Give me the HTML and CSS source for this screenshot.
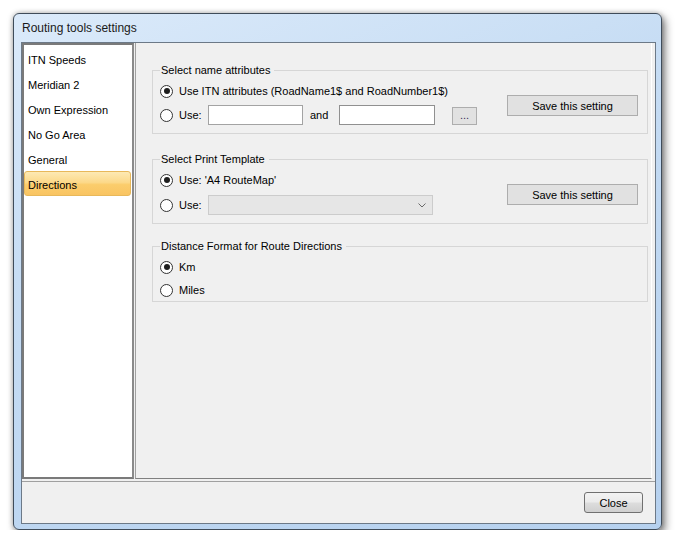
FILE: index.html
```html
<!DOCTYPE html>
<html lang="en">
<head>
  <meta charset="UTF-8" />
  <title>Routing tools settings</title>
  <link rel="stylesheet" href="styles.css">
</head>
<body>
  <div class="window">
    <div class="titlebar">Routing tools settings</div>
    <div class="client">
      <div class="main">
        <ul class="nav">
          <li>ITN Speeds</li>
          <li>Meridian 2</li>
          <li>Own Expression</li>
          <li>No Go Area</li>
          <li>General</li>
          <li class="selected">Directions</li>
        </ul>

        <div class="page">
          <fieldset class="group group-names">
            <legend>Select name attributes</legend>
            <div class="group-body">
              <div class="options">
                <div class="row"><span class="radio checked"></span><span>Use ITN attributes (RoadName1$ and RoadNumber1$)</span></div>
                <div class="row">
                  <span class="radio"></span><span class="use">Use:</span>
                  <input type="text" class="textbox" />
                  <span class="and">and</span>
                  <input type="text" class="textbox wide" />
                  <button class="browse">...</button>
                </div>
              </div>
              <button class="btn save">Save this setting</button>
            </div>
          </fieldset>

          <fieldset class="group group-template">
            <legend>Select Print Template</legend>
            <div class="group-body">
              <div class="options">
                <div class="row"><span class="radio checked"></span><span>Use: 'A4 RouteMap'</span></div>
                <div class="row">
                  <span class="radio"></span><span class="use">Use:</span>
                  <div class="combo">
                    <svg width="8" height="5" viewBox="0 0 8 5"><path d="M0.5 0.5 L4 4 L7.5 0.5" fill="none" stroke="#6a6a6a" stroke-width="1"/></svg>
                  </div>
                </div>
              </div>
              <button class="btn save">Save this setting</button>
            </div>
          </fieldset>

          <fieldset class="group group-distance">
            <legend>Distance Format for Route Directions</legend>
            <div class="options">
              <div class="row"><span class="radio checked"></span><span>Km</span></div>
              <div class="row"><span class="radio"></span><span>Miles</span></div>
            </div>
          </fieldset>
        </div>
      </div>

      <div class="footer">
        <button class="btn close">Close</button>
      </div>
    </div>
  </div>
</body>
</html>
```

FILE: styles.css
```css
body {
  margin: 0;
  background-color: #ffffff;
  font-family: "Liberation Sans", Arial, sans-serif;
  font-size: 11px;
  color: #000;
}
.window {
  margin: 13px 0 0 13px;
  width: 649px;
  height: 517px;
  box-sizing: border-box;
  padding: 0 5px 5px 7px;
  border: 1px solid #3f4c5a;
  border-radius: 6px;
  background: linear-gradient(160deg, #dbeafa 0%, #c7ddf4 35%, #bdd6f1 70%, #b6d1ef 100%);
  box-shadow: 3px 4px 9px rgba(0, 0, 0, 0.5), 0 0 5px rgba(0, 0, 0, 0.25);
}
.titlebar {
  height: 28px;
  line-height: 28px;
  padding-left: 1px;
  font-size: 12px;
  color: #1a1a1a;
}
.client {
  width: 635px;
  height: 482px;
  box-sizing: border-box;
  border: 1px solid #6c7987;
  background-color: #f0f0f0;
  display: flex;
  flex-direction: column;
}
.main {
  display: flex;
  height: 436px;
}
.nav {
  width: 112px;
  box-sizing: border-box;
  margin: 0;
  padding: 1px 0 0 0;
  list-style: none;
  background-color: #fff;
  border: 2px solid #7a7a7a;
  border-right-color: #8a8a8a;
}
.nav li {
  height: 25px;
  line-height: 28px;
  padding-left: 4px;
  margin-right: 1px;
  white-space: nowrap;
}
.nav li.selected {
  box-sizing: border-box;
  line-height: 26px;
  padding-left: 3px;
  border: 1px solid #e8b85a;
  border-radius: 3px;
  background: linear-gradient(#fde9b4 0%, #fcd98a 45%, #fbcd6c 55%, #f9c462 100%);
}
.page {
  width: 517px;
  box-sizing: border-box;
  margin-left: 1px;
  padding: 20px 3px 0 16px;
  border-left: 1px solid #a0a0a0;
  border-bottom: 1px solid #808080;
  border-right: 1px solid #ffffff;
}
.group {
  width: 496px;
  box-sizing: border-box;
  margin: 0;
  padding: 4px 9px 8px 7px;
  border: 1px solid #d6d6d6;
  min-width: 0;
}
.group legend {
  padding: 0 4px 0 1px;
  line-height: 14px;
  font-size: 11px;
}
.group-template {
  margin-top: 18px;
}
.group-distance {
  margin-top: 15px;
  padding-bottom: 1px;
}
.group-body {
  display: flex;
  justify-content: space-between;
  align-items: flex-start;
}
.row {
  display: flex;
  align-items: center;
  height: 20px;
  white-space: nowrap;
}
.group-names .row + .row {
  margin-top: 4px;
}
.group-template .row + .row {
  margin-top: 5px;
}
.group-distance .row + .row {
  margin-top: 3px;
}
.radio {
  position: relative;
  width: 13px;
  height: 13px;
  box-sizing: border-box;
  margin-right: 6px;
  border: 1px solid #333;
  border-radius: 50%;
  background-color: #fff;
  flex: none;
}
.radio.checked::after {
  content: "";
  position: absolute;
  left: 2.5px;
  top: 2.5px;
  width: 6px;
  height: 6px;
  border-radius: 50%;
  background-color: #1e1e1e;
}
.use {
  width: 29px;
}
.textbox {
  width: 95px;
  height: 20px;
  box-sizing: border-box;
  margin: 0;
  padding: 0;
  border: 1px solid #a3a3a3;
  background-color: #fff;
}
.textbox.wide {
  width: 96px;
  border-color: #909090;
}
.and {
  width: 29px;
  margin-left: 7px;
}
.browse {
  align-self: flex-end;
  width: 25px;
  height: 18px;
  margin-left: 17px;
  padding: 0 0 3px 0;
  border: 1px solid #adadad;
  background-color: #e1e1e1;
  font-family: inherit;
  font-size: 11px;
  color: #3a2f5a;
}
.btn {
  font-family: inherit;
  font-size: 11px;
  color: #000;
  padding: 0;
}
.save {
  width: 131px;
  height: 21px;
  margin-top: 14px;
  border: 1px solid #adadad;
  background-color: #e1e1e1;
}
.combo {
  width: 225px;
  height: 20px;
  box-sizing: border-box;
  border: 1px solid #cccccc;
  background-color: #e6e6e6;
  display: flex;
  align-items: center;
  justify-content: flex-end;
  padding-right: 6px;
}
.footer {
  flex: 1;
  margin-top: 2px;
  border-top: 1px solid #a0a0a0;
  display: flex;
  justify-content: flex-end;
  align-items: flex-start;
  padding: 10px 12px 0 0;
}
.close {
  width: 59px;
  height: 21px;
  border: 1px solid #707070;
  border-radius: 3px;
  background: linear-gradient(#f3f3f3 0%, #ebebeb 48%, #dddddd 52%, #cfcfcf 100%);
}
```
